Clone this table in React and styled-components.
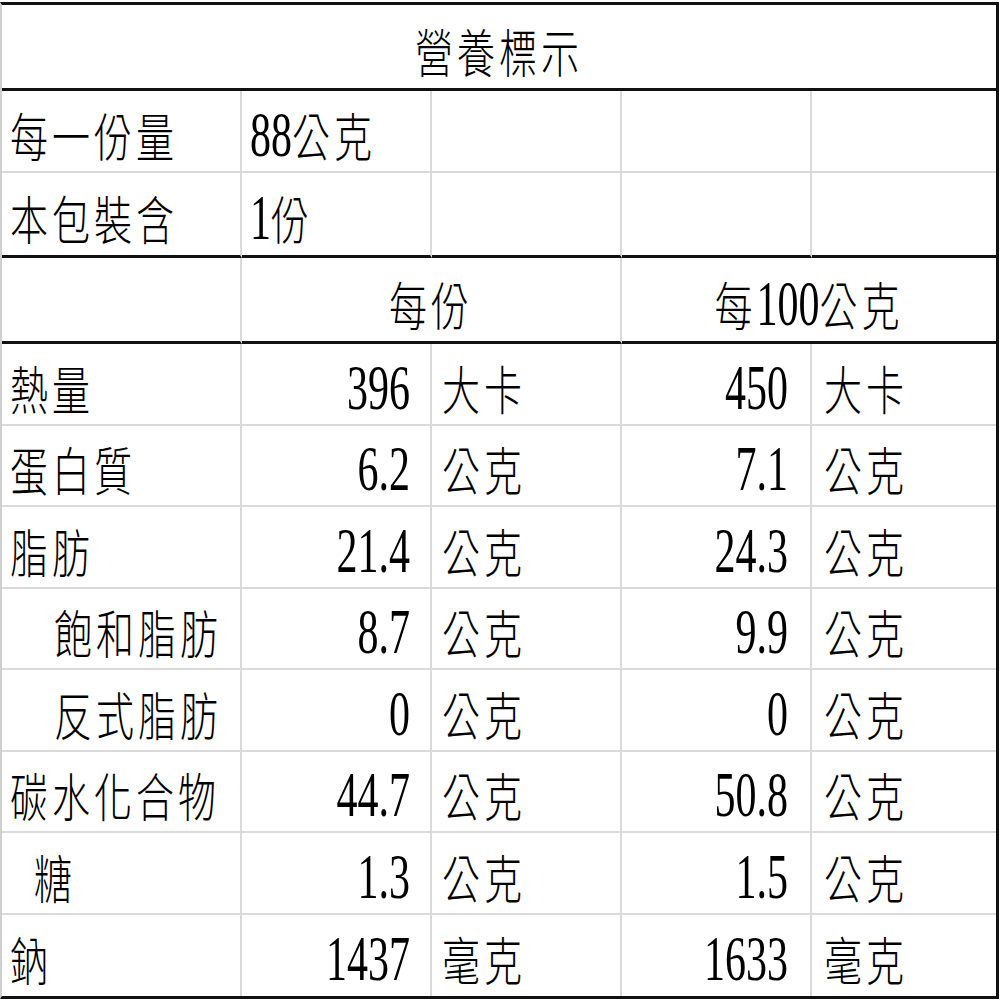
import React from "react";
import styled, { createGlobalStyle } from "styled-components";

const GlobalStyle = createGlobalStyle`
  html, body { margin: 0; padding: 0; background: #fff; }
  body { font-family: "Liberation Serif", "Noto Sans CJK TC", serif; }
`;

const Page = styled.div`
  width: 1000px;
  height: 1000px;
  padding-top: 2px;
  box-sizing: border-box;
  background: #fff;
  overflow: hidden;
`;

const Table = styled.div`
  display: grid;
  grid-template-columns: 240px 190px 190px 190px 184px;
  grid-template-rows: 86px 82px 85px 86px repeat(8, 1fr);
  width: 999px;
  height: 997px;
  box-sizing: border-box;
  border-top: 3px solid #111;
  border-right: 3px solid #111;
  border-bottom: 3px solid #111;
  border-left: 2px solid #cfcfcf;
`;

const Cell = styled.div`
  box-sizing: border-box;
  display: flex;
  align-items: center;
  justify-content: ${(p) =>
    p.$align === "right" ? "flex-end" : p.$align === "center" ? "center" : "flex-start"};
  grid-column: span ${(p) => p.$span || 1};
  min-height: 0;
  padding: 8px ${(p) => p.$pr || 0}px 0 ${(p) => p.$pl || 0}px;
  border-right: ${(p) => (p.$last ? "none" : "2px solid #dadada")};
  border-bottom: ${(p) =>
    p.$line === "thick" ? "3px solid #111" : p.$line === "none" ? "none" : "2px solid #dadada"};
  color: #000;
  white-space: nowrap;
`;

const Han = styled.span`
  display: inline-block;
  font-family: "Noto Sans CJK TC", "Noto Sans CJK SC", sans-serif;
  font-weight: 300;
  font-size: 38px;
  line-height: 42px;
  letter-spacing: 4px;
  transform: scaleY(1.38);
`;

const Lat = styled.span`
  display: inline-block;
  font-family: "Liberation Serif", serif;
  font-size: 42px;
  line-height: 42px;
  transform: scaleY(1.5);
`;

const Txt = ({ children }) => {
  const runs = String(children).match(/[\x00-\x7F]+|[^\x00-\x7F]+/g) || [];
  return (
    <>
      {runs.map((r, i) =>
        /^[\x00-\x7F]+$/.test(r) ? <Lat key={i}>{r}</Lat> : <Han key={i}>{r}</Han>
      )}
    </>
  );
};

const rows = [
  ["熱量", 0, "396", "大卡", "450", "大卡"],
  ["蛋白質", 0, "6.2", "公克", "7.1", "公克"],
  ["脂肪", 0, "21.4", "公克", "24.3", "公克"],
  ["飽和脂肪", 2, "8.7", "公克", "9.9", "公克"],
  ["反式脂肪", 2, "0", "公克", "0", "公克"],
  ["碳水化合物", 0, "44.7", "公克", "50.8", "公克"],
  ["糖", 1, "1.3", "公克", "1.5", "公克"],
  ["鈉", 0, "1437", "毫克", "1633", "毫克"],
];

const indent = [8, 32, 52];

export default function App() {
  return (
    <Page>
      <GlobalStyle />
      <Table>
        <Cell $span={5} $last $align="center" $line="thick">
          <Txt>營養標示</Txt>
        </Cell>

        <Cell $pl={8}><Txt>每一份量</Txt></Cell>
        <Cell $pl={8}><Txt>88公克</Txt></Cell>
        <Cell />
        <Cell />
        <Cell $last />

        <Cell $pl={8} $line="thick"><Txt>本包裝含</Txt></Cell>
        <Cell $pl={8} $line="thick"><Txt>1份</Txt></Cell>
        <Cell $line="thick" />
        <Cell $line="thick" />
        <Cell $last $line="thick" />

        <Cell $line="thick" />
        <Cell $span={2} $align="center" $line="thick"><Txt>每份</Txt></Cell>
        <Cell $span={2} $last $align="center" $line="thick"><Txt>每100公克</Txt></Cell>

        {rows.map(([label, lvl, v1, u1, v2, u2], i) => {
          const line = i === rows.length - 1 ? "none" : "thin";
          return (
            <React.Fragment key={label}>
              <Cell $pl={indent[lvl]} $line={line}><Txt>{label}</Txt></Cell>
              <Cell $align="right" $pr={20} $line={line}><Txt>{v1}</Txt></Cell>
              <Cell $pl={10} $line={line}><Txt>{u1}</Txt></Cell>
              <Cell $align="right" $pr={22} $line={line}><Txt>{v2}</Txt></Cell>
              <Cell $pl={12} $last $line={line}><Txt>{u2}</Txt></Cell>
            </React.Fragment>
          );
        })}
      </Table>
    </Page>
  );
}
